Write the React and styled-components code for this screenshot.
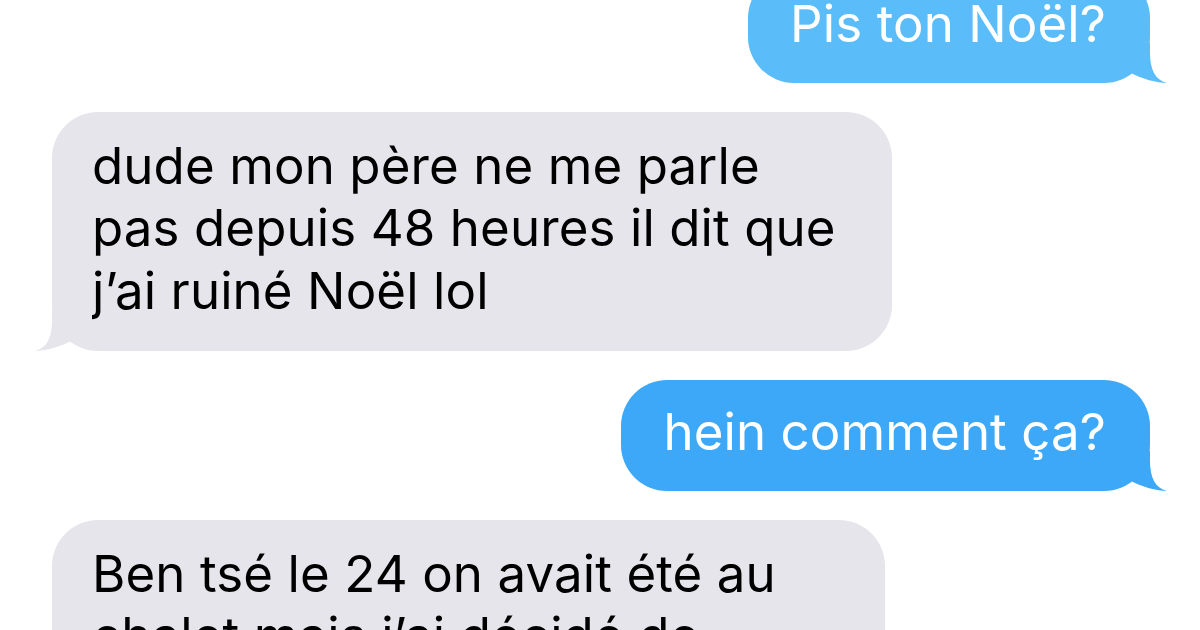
import React from "react";
import styled, { createGlobalStyle } from "styled-components";

const Global = createGlobalStyle`
  html, body { margin: 0; padding: 0; background: #ffffff; }
  body {
    width: 1200px;
    height: 630px;
    overflow: hidden;
    font-family: Inter, "Liberation Sans", sans-serif;
  }
`;

const Screen = styled.main`
  width: 1200px;
  height: 630px;
  overflow: hidden;
  background: #ffffff;
`;

const Thread = styled.div`
  display: flex;
  flex-direction: column;
  gap: 29px;
  padding: 0 50px 0 52px;
  margin-top: -28px;
`;

const Bubble = styled.div`
  position: relative;
  box-sizing: border-box;
  align-self: ${(p) => (p.$side === "right" ? "flex-end" : "flex-start")};
  width: ${(p) => (p.$width ? `${p.$width}px` : "auto")};
  background: ${(p) => p.$color};
  color: ${(p) => (p.$side === "right" ? "#ffffff" : "#000000")};
  border-radius: 46px;
  padding: ${(p) => (p.$side === "right" ? "21px 44px 27px 42px" : "23px 40px 29px 40px")};
  font-size: 51px;
  line-height: 62.5px;
  letter-spacing: 0.1px;
  white-space: nowrap;
`;

const TailSvg = styled.svg`
  position: absolute;
  bottom: 0;
  width: 57px;
  height: 40px;
  overflow: visible;
  ${(p) => (p.$side === "right" ? "right: -17px;" : "left: -17px; transform: scaleX(-1);")}
`;

function Tail({ side, color }) {
  return (
    <TailSvg $side={side} viewBox="-40 -40 57 40" aria-hidden="true">
      <path
        d="M0 -40 L0 -30 C0 -14 5 -3 17 0 C7 0 -8 -4 -21 -11 L-40 -11 L-40 -40 Z"
        fill={color}
      />
    </TailSvg>
  );
}

function Message({ side, color, width, lines }) {
  return (
    <Bubble $side={side} $color={color} $width={width}>
      {lines.map((l, i) => (
        <React.Fragment key={i}>
          {i > 0 && <br />}
          {l}
        </React.Fragment>
      ))}
      <Tail side={side} color={color} />
    </Bubble>
  );
}

const GRAY = "#e6e5eb";

const messages = [
  { side: "right", color: "#5abdfa", lines: ["Pis ton Noël?"] },
  {
    side: "left",
    color: GRAY,
    width: 840,
    lines: ["dude mon père ne me parle", "pas depuis 48 heures il dit que", "j’ai ruiné Noël lol"],
  },
  { side: "right", color: "#3ea8f8", lines: ["hein comment ça?"] },
  {
    side: "left",
    color: GRAY,
    width: 833,
    lines: ["Ben tsé le 24 on avait été au", "chalet mais j’ai décidé de"],
  },
];

export default function App() {
  return (
    <Screen>
      <Global />
      <Thread>
        {messages.map((m, i) => (
          <Message key={i} {...m} />
        ))}
      </Thread>
    </Screen>
  );
}
